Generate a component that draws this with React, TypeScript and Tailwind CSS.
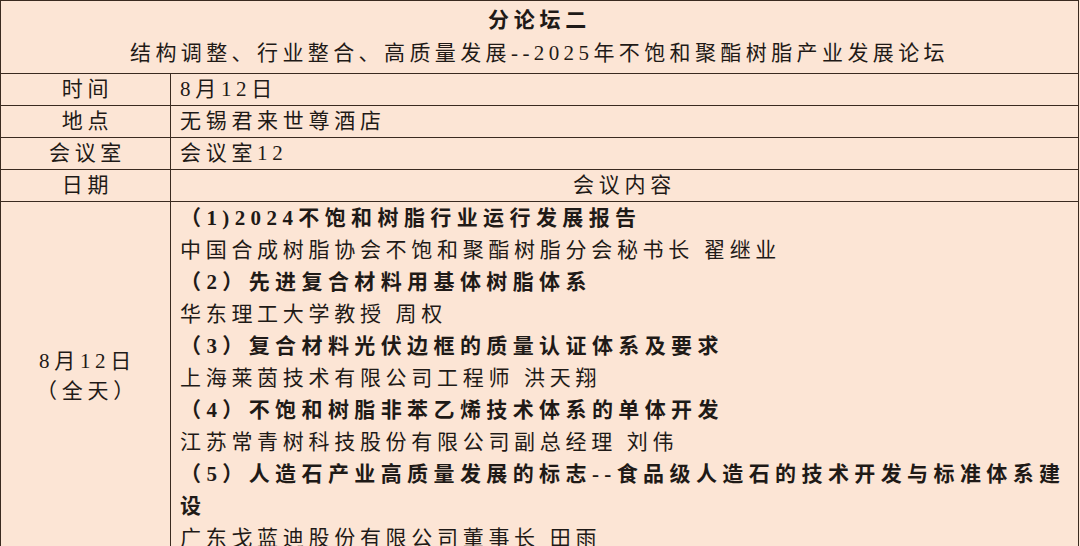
import React from "react";

const font = {
  fontFamily: '"Liberation Serif", "Noto Sans CJK SC", serif',
};

function LabelRow({ label, value }: { label: string; value: string }) {
  return (
    <div className="flex h-[32px] border-b border-[#3a2a20]">
      <div className="w-[170px] shrink-0 border-r border-[#3a2a20] flex items-center justify-center pl-[4px]">
        {label}
      </div>
      <div className="flex-1 flex items-center pl-[9px]">{value}</div>
    </div>
  );
}

export default function App() {
  return (
    <div
      className="w-[1080px] h-[546px] overflow-hidden bg-[#fce5d5] text-[#1f1a17]"
      style={font}
    >
      <div className="w-[1079px] border border-[#3a2a20] text-[21px] tracking-[4.7px]">
        <div className="border-b border-[#3a2a20] pt-[3px] pb-[3px] text-center leading-[33px]">
          <div className="font-bold">分论坛二</div>
          <div className="tracking-[4.4px]">结构调整、行业整合、高质量发展--2025年不饱和聚酯树脂产业发展论坛</div>
        </div>
        <LabelRow label="时间" value="8月12日" />
        <LabelRow label="地点" value="无锡君来世尊酒店" />
        <LabelRow label="会议室" value="会议室12" />
        <div className="flex h-[32px] border-b border-[#3a2a20]">
          <div className="w-[170px] shrink-0 border-r border-[#3a2a20] flex items-center justify-center pl-[4px]">
            日期
          </div>
          <div className="flex-1 flex items-center justify-center">会议内容</div>
        </div>
        <div className="flex">
          <div className="w-[170px] shrink-0 border-r border-[#3a2a20] flex flex-col items-center justify-center leading-[30px] pl-[4px] pb-[4px]">
            <div>8月12日</div>
            <div>（全天）</div>
          </div>
          <div className="flex-1 pl-[9px] leading-[32px]">
            <div className="font-bold tracking-[5.4px] whitespace-nowrap">（1)2024不饱和树脂行业运行发展报告</div>
            <div className="whitespace-nowrap">中国合成树脂协会不饱和聚酯树脂分会秘书长 翟继业</div>
            <div className="font-bold tracking-[5.4px] whitespace-nowrap">（2）先进复合材料用基体树脂体系</div>
            <div className="whitespace-nowrap">华东理工大学教授 周权</div>
            <div className="font-bold tracking-[5.4px] whitespace-nowrap">（3）复合材料光伏边框的质量认证体系及要求</div>
            <div className="whitespace-nowrap">上海莱茵技术有限公司工程师 洪天翔</div>
            <div className="font-bold tracking-[5.4px] whitespace-nowrap">（4）不饱和树脂非苯乙烯技术体系的单体开发</div>
            <div className="whitespace-nowrap">江苏常青树科技股份有限公司副总经理 刘伟</div>
            <div className="font-bold tracking-[5.4px]">
              <div className="whitespace-nowrap">（5）人造石产业高质量发展的标志--食品级人造石的技术开发与标准体系建</div>
              <div>设</div>
            </div>
            <div className="whitespace-nowrap">广东戈蓝迪股份有限公司董事长 田雨</div>
          </div>
        </div>
      </div>
    </div>
  );
}
